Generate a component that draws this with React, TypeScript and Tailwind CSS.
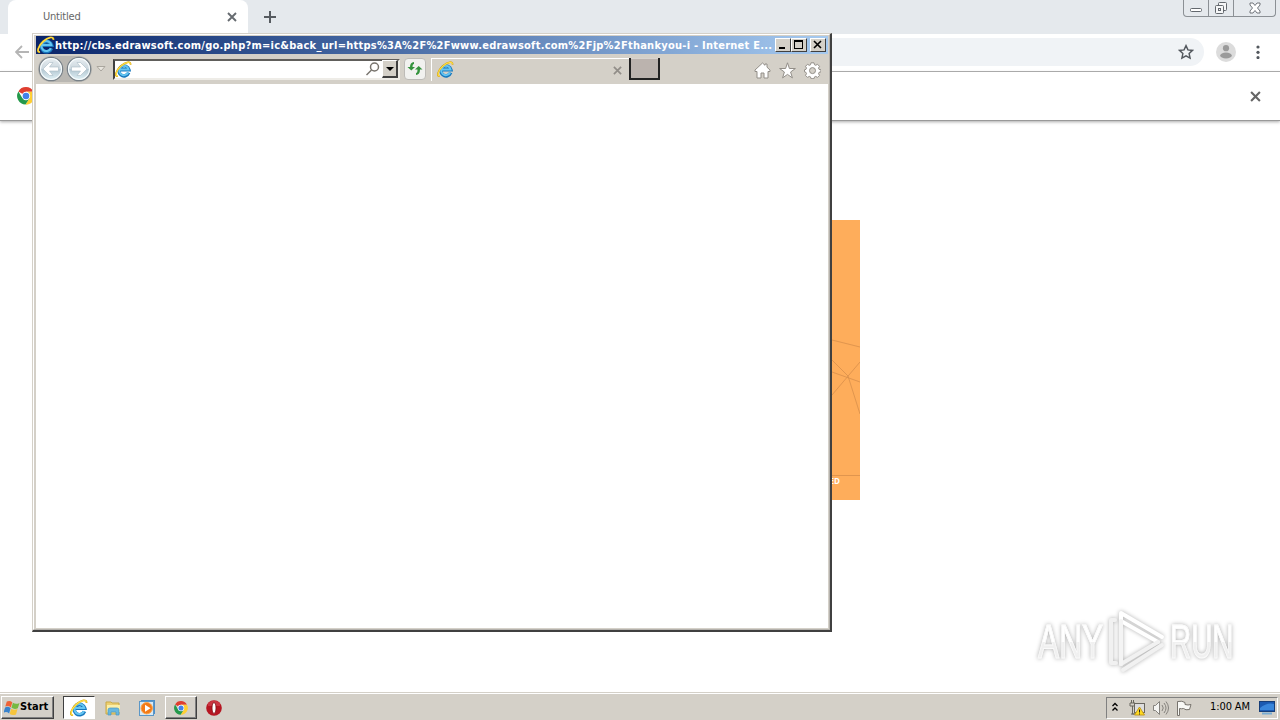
import type { ReactNode } from "react";

const ui = "font-['DejaVu_Sans_Condensed','DejaVu_Sans',sans-serif]";

function ExplorerIcon({ className }: { className: string }) {
  return (
    <svg viewBox="0 0 18 18" className={className} fill="none">
      <path d="M14.500 12.400A5.300 5.300 0 1 1 14.700 9.200H4.500" stroke="#1878bd" strokeWidth="3.600" />
      <path d="M13.900 12.200A5 5 0 1 1 14.300 9H4.500" stroke="#64c5f2" strokeWidth="2.100" />
      <path d="M3 16C-1 17 1 10 6 5.500S17-.5 16.500 4" stroke="#d9a514" strokeWidth="1.800" />
      <path d="M3 15.800C-.5 16.500 1.300 10 6.200 5.500S16.300.2 16.300 3.500" stroke="#ffe045" strokeWidth="1.200" />
    </svg>
  );
}

function ChromeIcon({ className }: { className: string }) {
  return (
    <svg viewBox="0 0 18 18" className={className}>
      <path d="M9 9 1.4 4.5A8.6 8.6 0 0 1 16.6 4.7H9Z" fill="#df3e30" />
      <path d="M9 4.7H16.6A8.6 8.6 0 0 1 8.5 17.6L12.7 11Z" fill="#ffcf32" />
      <path d="M1.4 4.5A8.6 8.6 0 0 0 8.5 17.6L12.7 11H9L5.3 11Z" fill="#25994b" />
      <circle cx="9" cy="9" r="4.2" fill="#fff" />
      <circle cx="9" cy="9" r="3.3" fill="#4382e8" />
    </svg>
  );
}

function Cross({ className }: { className: string }) {
  return (
    <svg viewBox="0 0 10 10" className={className} fill="none" stroke="currentColor" strokeWidth="1.9">
      <path d="m1 1 8 8M9 1 1 9" />
    </svg>
  );
}

function BrowserTabs() {
  return (
    <header className="flex h-[34px] bg-[#e5e9ed]">
      <div className="ml-2 flex h-full w-60 items-center rounded-t-lg bg-white pr-[11px] pl-[35px]">
        <span className={`${ui} grow pt-px text-[11px] tracking-[-0.2px] text-[#666]`}>Untitled</span>
        <Cross className="size-2.5 text-[#666b70]" />
      </div>
      <svg viewBox="0 0 12 12" className="mt-[11px] ml-4 size-3" stroke="#565b60" strokeWidth="2"><path d="M6 0v12M0 6h12" /></svg>
      <div className="mr-1 ml-auto flex h-[17px] w-[93px] rounded-b border border-t-0 border-[#8b9095] text-[#63686e]">
        <div className="flex w-[25px] justify-center border-r border-[#8b9095]">
          <svg viewBox="0 0 14 16" className="h-4 w-3.5" fill="#fff" stroke="currentColor"><rect x="1.5" y="8.5" width="11" height="3" rx="1" /></svg>
        </div>
        <div className="flex w-[25px] justify-center border-r border-[#8b9095]">
          <svg viewBox="0 0 14 16" className="h-4 w-3.5" fill="#f5f6f7" stroke="currentColor"><rect x="4.5" y="2.5" width="8" height="8" rx="1" /><rect x="1.5" y="5.5" width="8" height="8" rx="1" /><rect x="4.5" y="8.5" width="2" height="2" /></svg>
        </div>
        <div className="flex grow justify-center">
          <svg viewBox="0 0 14 16" className="h-4 w-3.5" fill="#fff" stroke="currentColor" strokeWidth=".9"><path d="M2 3h3l2 2.500L9 3h3v2L9.500 8l2.500 3v2H9l-2-2.500L5 13H2v-2l2.500-3L2 5Z" /></svg>
        </div>
      </div>
    </header>
  );
}

function BrowserToolbar() {
  return (
    <div className="flex h-[38px] items-center border-b border-[#aaa] bg-white pr-4 pb-px pl-[15px]">
      <svg viewBox="0 0 14 14" className="size-3.5" fill="none" stroke="#b5b5b5" strokeWidth="1.800"><path d="M14 7H1M7 1 1 7l6 6" /></svg>
      <div className="ml-20 flex h-7 grow items-center justify-end rounded-full bg-[#f0f3f6] pr-2.5">
        <svg viewBox="0 0 24 24" className="size-4" fill="none" stroke="#53585e" strokeWidth="2.2"><path d="m12 2.500 2.900 6.300 6.900.8-5.100 4.700 1.400 6.800-6.100-3.400-6.100 3.400 1.400-6.800-5.100-4.700 6.900-.8Z" /></svg>
      </div>
      <svg viewBox="0 0 20 20" className="ml-3 size-5"><circle cx="10" cy="10" r="10" fill="#dcdcdc" /><circle cx="10" cy="6.200" r="3.100" fill="#9a9a9a" /><ellipse cx="10" cy="13.500" rx="5.800" ry="3" fill="#9a9a9a" /></svg>
      <svg viewBox="0 0 12 14" className="ml-4 h-3.5 w-3" fill="#53585e"><circle cx="6" cy="2" r="1.600" /><circle cx="6" cy="7.300" r="1.600" /><circle cx="6" cy="12.600" r="1.600" /></svg>
    </div>
  );
}

function Banner() {
  return (
    <div className="absolute top-[220px] left-[420px] h-[280px] w-[440px] bg-[#fead5b]">
      <svg viewBox="412 0 28 280" className="ml-auto h-[280px] w-7" fill="none" stroke="#d88f4b" strokeWidth=".8">
        <path d="m412 120 28 7M412 140l16 16 12 38M412 175l28-33M412 152l28 10M412 255.500h28" />
      </svg>
      <span className="absolute top-[256px] right-[20px] font-['Open_Sans',sans-serif] text-[8px] leading-[10px] font-bold text-white">BLOCKED</span>
    </div>
  );
}

function Watermark() {
  return (
    <div className="absolute top-[604px] left-[1032px] flex h-[74px] w-[208px] items-center justify-between px-1.5 font-['Liberation_Sans',sans-serif] text-[48px] drop-shadow-[0_0_2px_#b0b0b0]">
      <span className="w-[65px] pt-0.5"><span className="block w-max origin-left scale-x-[0.66] bg-linear-to-b from-white from-50% to-[#f0f0f0] to-50% bg-clip-text whitespace-nowrap text-transparent [-webkit-text-stroke:1px_#fafafa]">ANY</span></span>
      <svg viewBox="0 0 58 66" className="h-[66px] w-[58px]" fill="none" stroke="#fff" strokeWidth="4" strokeLinejoin="round" strokeLinecap="round">
        <path d="M13 56V5l41 24M13 13l37 21" />
        <path d="M7 12H3v43h5M13 56l37-22M15 62l39-25" stroke="#f1f1f1" />
        <path d="M13 13v43" stroke="#f4f4f4" />
      </svg>
      <span className="w-[64px] pt-0.5"><span className="block w-max origin-left scale-x-[0.61] bg-linear-to-b from-white from-50% to-[#f0f0f0] to-50% bg-clip-text whitespace-nowrap text-transparent [-webkit-text-stroke:1px_#fafafa]">RUN</span></span>
    </div>
  );
}

function CaptionButton({ children, className = "" }: { children: ReactNode; className?: string }) {
  return (
    <div className={`${className} flex h-3.5 w-4 border border-t-white border-r-[#404040] border-b-[#404040] border-l-white bg-[#d4d0c8]`}>
      <svg viewBox="0 0 14 12" className="h-3 w-3.5" fill="none" stroke="#000">{children}</svg>
    </div>
  );
}

function NavArrow({ flip = false }: { flip?: boolean }) {
  return (
    <svg viewBox="0 0 26 26" className={flip ? "size-[26px] -scale-x-100" : "size-[26px]"}>
      <defs><linearGradient id="nav" x2="0" y2="1"><stop stopColor="#e9eff2" /><stop offset=".48" stopColor="#cdd8df" /><stop offset=".5" stopColor="#b3c6d1" /><stop offset="1" stopColor="#e3f4f8" /></linearGradient></defs>
      <circle cx="13" cy="13" r="11.700" fill="url(#nav)" stroke="#788188" strokeWidth="1.200" />
      <circle cx="13" cy="13" r="10.500" fill="none" stroke="#f6fbfc" strokeWidth="1.100" />
      <path d="m5 13 6.500-6.500h3.500L11.500 11H20.500v4h-9l3.500 4.500h-3.500Z" fill="#fff" stroke="#a7bac5" strokeWidth=".6" />
    </svg>
  );
}

function ExplorerToolbar() {
  return (
    <div className="flex h-[30px] shrink-0 items-center bg-[#d4d0c8]">
      <div className="ml-0.5 flex items-center gap-0.5 rounded-full bg-[#b9b7b2]"><NavArrow /><NavArrow flip /></div>
      <svg viewBox="0 0 10 6" className="ml-1 h-1.5 w-2.5" fill="#e9e6df" stroke="#aaa69e"><path d="M1 .5h8L5 5Z" /></svg>
      <div className="ml-[7px] flex h-[21px] w-[287px] items-center border-2 border-t-[#605e5b] border-r-[#eeece7] border-b-[#eeece7] border-l-[#404040] bg-white">
        <ExplorerIcon className="size-[17px]" />
        <svg viewBox="0 0 14 14" className="mr-0.5 ml-auto size-3.5" fill="none" stroke="#77736d" strokeWidth="1.500"><circle cx="8.500" cy="5" r="4" /><path d="m5.500 8-5 5" /></svg>
        <div className="flex h-[18px] w-4 items-center justify-center border border-t-white border-r-2 border-r-[#404040] border-b-2 border-b-[#404040] border-l-white bg-[#d4d0c8]">
          <svg viewBox="0 0 8 4" className="h-1 w-2"><path d="M0 0h8L4 4Z" /></svg>
        </div>
      </div>
      <div className="ml-1 flex size-[22px] items-center justify-center rounded-sm border border-[#bdbbb7] bg-[#f1f1ef]">
        <svg viewBox="0 0 16 16" className="size-4" fill="#34933d"><path d="M7 1v2Q5.500 3 5.500 6h2.500L4.300 9.500.5 6H3Q3 1.500 7 1ZM9 14v-2q1.500 0 1.500-3.500H8L11.700 5l3.800 3.500H13Q13 13.500 9 14Z" /></svg>
      </div>
      <div className="ml-[5px] flex h-[23px] w-[198px] items-center border-t border-l border-white pr-[7px] pl-[5px]">
        <ExplorerIcon className="size-[17px]" />
        <Cross className="mt-px ml-auto size-[9px] text-[#918d88]" />
      </div>
      <div className="h-[22px] w-[31px] border-r-2 border-b-2 border-l-2 border-[#222] bg-[#bbb3ae] shadow-[inset_0_1px_#d8d3ce]" />
      <div className="mt-[3px] mr-[7px] ml-auto flex items-center gap-2">
        <svg viewBox="0 0 17 17" className="size-[17px]" fill="#fff" stroke="#928e88"><path d="M1 8 8.500 1l2.500 2.300V2h2v3.200L16 8v1.500h-2V16h-4v-5H7v5H3V9.500H1Z" /></svg>
        <svg viewBox="0 0 17 17" className="size-[17px]" fill="#fff" stroke="#928e88"><path d="m8.500.8 1.900 5.700h6l-4.800 3.500 1.800 5.900-4.900-3.500-4.900 3.500L5.400 10 .6 6.500h6Z" /></svg>
        <svg viewBox="0 0 17 17" className="size-[17px]" fill="#fff" stroke="#928e88"><path d="M7 .8h3l.5 2 1.200.5 1.800-1 2 2-1 1.800.5 1.200 2 .5v2l-2 .6-.5 1.200 1 1.800-2 2-1.800-1-1.200.5-.5 1.800H7l-.5-1.800-1.200-.5-1.800 1-2-2 1-1.800-.5-1.200-1.500-.6v-2l1.500-.5.5-1.200-1-1.800 2-2 1.800 1 1.200-.5Z" /><circle cx="8.500" cy="8.600" r="3" fill="#d4d0c8" /></svg>
      </div>
    </div>
  );
}

function ExplorerWindow() {
  return (
    <section className="absolute top-[33px] left-8 flex h-[599px] w-[800px] flex-col border border-t-[#d4d0c8] border-r-2 border-r-[#404040] border-b-2 border-b-[#404040] border-l-[#d4d0c8] bg-[#d4d0c8]">
      <div className="flex grow flex-col border border-t-white border-r-[#b5b2ad] border-b-[#b5b2ad] border-l-white p-px pr-px pl-[2px]">
        <div className="flex h-[18px] shrink-0 items-center bg-linear-to-r from-[#0a246a] to-[#a6caf0] pr-px">
          <ExplorerIcon className="ml-px size-[18px] shrink-0" />
          <span className="w-[720px] shrink-0 overflow-hidden pt-px font-['DejaVu_Sans_Condensed','DejaVu_Sans',sans-serif] text-[11px] leading-[17px] font-bold tracking-[0.247px] whitespace-nowrap text-white">
            http://cbs.edrawsoft.com/go.php?m=ic&amp;back_url=https%3A%2F%2Fwww.edrawsoft.com%2Fjp%2Fthankyou-i - Internet E...
          </span>
          <CaptionButton><path d="M3 9h6" strokeWidth="2" /></CaptionButton>
          <CaptionButton><rect x="2.500" y="1.500" width="8" height="8" /><path d="M2 2h9" strokeWidth="2" /></CaptionButton>
          <CaptionButton className="ml-[3px]"><path d="m3 2 7 7M10 2 3 9" strokeWidth="1.600" /></CaptionButton>
        </div>
        <ExplorerToolbar />
        <main className="grow bg-white" />
      </div>
    </section>
  );
}

function Taskbar() {
  return (
    <footer className={`${ui} flex h-7 items-center border-t border-[#d4d0c8] bg-[#d4d0c8] pt-0.5 text-[11px] text-black shadow-[inset_0_1px_#fff]`}>
      <div className="ml-px flex h-[23px] w-[53px] items-center border border-t-white border-r-[#404040] border-b-[#404040] border-l-white pl-0.5 font-bold shadow-[inset_-1px_-1px_#808080]">
        <svg viewBox="0 0 16 16" className="size-4 shrink-0"><path d="M2.800 1.500q3-1.500 5.500.8L6.800 7.400q-2.500-2.300-5.500-.8Z" fill="#ee6337" /><path d="M8.900 2.700q3 2 6.600.2l-1.700 5.300q-3.300 1.700-6.300-.4Z" fill="#76b943" /><path d="M1.100 7.500q3-1.800 5.500.7l-1.500 5.300q-2.500-2.300-5.600-.8Z" fill="#3983cc" /><path d="M7.200 8.700q3 2 6.300.3L12 14.400q-3.300 1.500-6.300-.5Z" fill="#f6c53d" /></svg>
        <span className="tracking-[0.05px]">Start</span>
      </div>
      <div className="ml-[9px] flex h-[23px] w-8 items-center justify-center border border-t-[#404040] border-r-white border-b-white border-l-[#404040] bg-white"><ExplorerIcon className="size-[18px]" /></div>
      <svg viewBox="0 0 18 18" className="ml-[9px] size-[18px]"><path d="M2 3h5l1 1h7v11H2Z" fill="#edcf70" stroke="#c9a947" /><path d="M3 6h13v7H3Z" fill="#fbefa9" /><path d="M4 16v-5q0-2 2-2h7q2 0 2 2v5h-3v-3H7v3Z" fill="#68b8df" stroke="#4796c3" strokeWidth=".7" /></svg>
      <svg viewBox="0 0 18 18" className="ml-4 size-[18px]"><rect x="3.500" y="1.500" width="13" height="13" fill="#acd4f2" stroke="#4c8ec8" /><rect x="1.500" y="2.500" width="14" height="14" fill="#d7e9f6" stroke="#5b97c7" /><circle cx="8.700" cy="9.200" r="5.700" fill="#f37a17" stroke="#fca54b" /><path d="m7 5.700 5.500 3.500L7 12.700Z" fill="#fff" /></svg>
      <div className="ml-[9px] flex h-[23px] w-8 items-center justify-center border border-t-white border-r-[#404040] border-b-[#404040] border-l-white shadow-[inset_-1px_-1px_#808080]"><ChromeIcon className="size-3.5" /></div>
      <svg viewBox="0 0 18 18" className="ml-2 size-[18px]"><circle cx="9" cy="9" r="7.800" fill="#b61622" /><path d="M3 4q6-5 12 0v3H3Z" fill="#df5360" opacity=".5" /><ellipse cx="9" cy="9" rx="2" ry="5.500" fill="#fff" stroke="#7b0b12" strokeWidth=".8" /></svg>
      <div className="mr-0.5 ml-auto flex h-[22px] w-[172px] items-center border border-t-[#808080] border-r-white border-b-white border-l-[#808080] pl-[3px]">
        <svg viewBox="0 0 9 10" className="mb-0.5 size-2.5" fill="none" stroke="#000" strokeWidth="1.300"><path d="m2 4 2.500-2.500L7 4M2 8.500 4.500 6 7 8.500" /></svg>
        <svg viewBox="0 0 18 18" className="ml-2 size-[18px]" fill="none" stroke="#69665f"><path d="M3.500 1v3M5.500 1v3M2 4h5v3H2ZM4.500 7v8H8" /><rect x="6.500" y="4.500" width="10" height="9" fill="#ddd" /><path d="M3 15h7" /><path d="m11.500 8 5 8h-10Z" fill="#ffd91f" stroke="#c39b20" /><path d="M11.500 10.500v3M11.500 14.500v1" stroke="#222" /></svg>
        <svg viewBox="0 0 18 18" className="ml-1.5 size-[18px]" fill="none" stroke="#85827d"><path d="M1.500 6.500h2l4-4v13l-4-4h-2Z" fill="#f4f4f2" /><path d="M10 6q2.500 3 0 6M12 4q4 5 0 10M14 2.500q5 6.500 0 13" /></svg>
        <svg viewBox="0 0 18 18" className="ml-[5px] size-[18px]" fill="#f8f8f5" stroke="#77736d"><path d="M3 2.500q4-1 7 1v2q3 1 6 0l-1.500 5q-4 1-6-1-2 .5-4 0v7H2.500v-14Z" /></svg>
        <span className="ml-[17px] whitespace-nowrap tracking-[-0.1px]">1:00 AM</span>
        <svg viewBox="0 0 18 16" className="mr-px ml-auto h-4 w-[18px]"><rect x="1.500" y="1.500" width="15" height="10" fill="#1b5ab1" stroke="#173e78" /><path d="M2 8q7-6 14-4v6H2Z" fill="#3986db" /><path d="M4 13.500h10" stroke="#78acd3" strokeWidth="2" /></svg>
      </div>
    </footer>
  );
}

export default function App() {
  return (
    <div className="relative flex h-screen w-screen flex-col overflow-hidden bg-white">
      <BrowserTabs />
      <BrowserToolbar />
      <div className="z-0 flex h-[49px] shrink-0 items-center border-b border-[#999] bg-white pr-[19px] pl-[17px] shadow-[0_1px_3px_#aaa]">
        <ChromeIcon className="size-[18px]" />
        <Cross className="ml-auto size-[11px] text-[#666]" />
      </div>
      <div className="grow" />
      <Taskbar />
      <Banner />
      <Watermark />
      <ExplorerWindow />
    </div>
  );
}
